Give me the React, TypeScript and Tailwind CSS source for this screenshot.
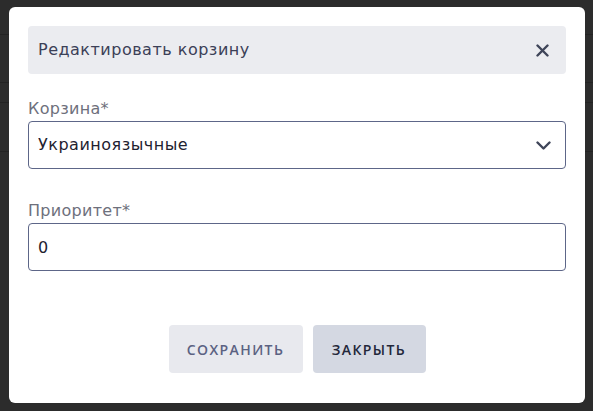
import { useState } from 'react';

export default function App() {
  const [basket, setBasket] = useState('Украиноязычные');
  const [priority, setPriority] = useState('0');

  return (
    <div
      className="relative w-full h-screen overflow-hidden bg-[#2c2c2c]"
      style={{ fontFamily: '"DejaVu Sans", "Open Sans", sans-serif' }}
    >
      {/* Table lines behind the overlay */}
      <div className="absolute inset-x-0 top-[34px] h-px bg-[#232323]"></div>
      <div className="absolute inset-x-0 top-[82px] h-px bg-[#232323]"></div>
      <div className="absolute inset-x-0 top-[102px] h-px bg-[#232323]"></div>
      <div className="absolute inset-x-0 top-[151px] h-px bg-[#232323]"></div>

      <div className="relative flex pt-[7px] pl-[9px]">
        <div className="w-[576px] h-[396px] bg-white rounded-md px-[19px] pt-[19px] flex flex-col">
          {/* Header */}
          <div className="h-12 bg-[#ebecf0] rounded flex items-center justify-between pl-[10px] pr-[17px]">
            <span className="text-[16px] tracking-[0.5px] text-[#3b4057]">Редактировать корзину</span>
            <button type="button" className="text-[#3f4559]">
              <svg width="13" height="13" viewBox="0 0 13 13" fill="none" stroke="currentColor" strokeWidth={2.4} strokeLinecap="round">
                <path d="M1.5 1.5l10 10M11.5 1.5l-10 10" />
              </svg>
            </button>
          </div>

          {/* Basket */}
          <label className="mt-[25px] mb-[2px] text-[16px] leading-5 tracking-[0.3px] text-[#6e707c]">Корзина*</label>
          <div className="relative">
            <select
              value={basket}
              onChange={(e) => setBasket(e.target.value)}
              className="w-full h-12 appearance-none border border-[#5d6688] rounded pl-[9px] text-[16px] tracking-[0.5px] text-[#1f2230] bg-white outline-none"
            >
              <option>Украиноязычные</option>
              <option>Русскоязычные</option>
            </select>
            <svg className="absolute right-[15px] top-[20px] text-[#3f4559] pointer-events-none" width="15" height="9" viewBox="0 0 15 9" fill="none" stroke="currentColor" strokeWidth={2.4} strokeLinecap="round" strokeLinejoin="round">
              <path d="M1.5 1.5l6 6 6-6" />
            </svg>
          </div>

          {/* Priority */}
          <label className="mt-[32px] mb-[2px] text-[16px] leading-5 tracking-[0.3px] text-[#6e707c]">Приоритет*</label>
          <input
            value={priority}
            onChange={(e) => setPriority(e.target.value)}
            className="w-full h-12 border border-[#5d6688] rounded pl-[9px] text-[16px] text-[#1f2230] outline-none"
          />

          {/* Actions */}
          <div className="mt-[54px] flex justify-center gap-[10px]" style={{ fontFamily: '"Open Sans", sans-serif' }}>
            <button type="button" className="w-[134px] h-12 rounded bg-[#e8e9ee] text-[14px] font-semibold tracking-[0.1em] text-[#5b6282]">
              СОХРАНИТЬ
            </button>
            <button type="button" className="w-[113px] h-12 rounded bg-[#d4d8e2] text-[14px] font-semibold tracking-[0.1em] text-[#23273a]">
              ЗАКРЫТЬ
            </button>
          </div>
        </div>
      </div>
    </div>
  );
}
